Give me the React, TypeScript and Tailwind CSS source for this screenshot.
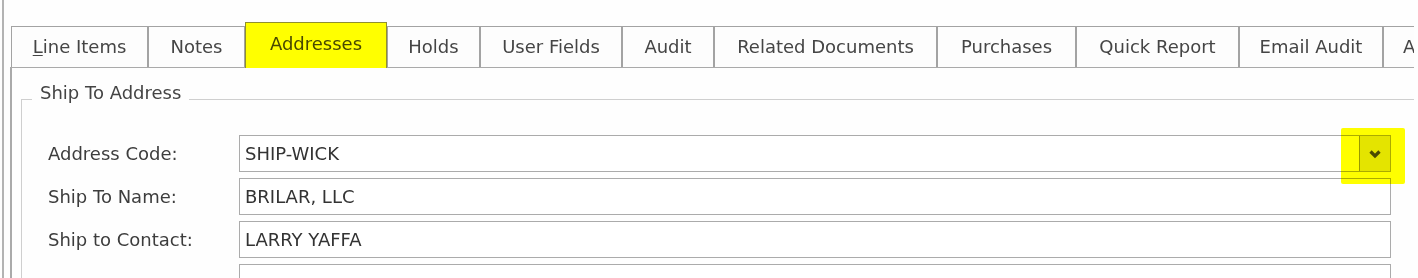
import React from "react";

const tabs = [
  { label: "Line Items", w: "w-[137px]", underline: true },
  { label: "Notes", w: "w-[97px]" },
  { label: "Addresses", w: "w-[142px]", selected: true },
  { label: "Holds", w: "w-[93px]" },
  { label: "User Fields", w: "w-[142px]" },
  { label: "Audit", w: "w-[92px]" },
  { label: "Related Documents", w: "w-[223px]" },
  { label: "Purchases", w: "w-[139px]" },
  { label: "Quick Report", w: "w-[163px]" },
  { label: "Email Audit", w: "w-[144px]" },
  { label: "Attachments", w: "w-[140px]", left: true },
];

const fields = [
  { label: "Address Code:", value: "SHIP-WICK", dropdown: true },
  { label: "Ship To Name:", value: "BRILAR, LLC" },
  { label: "Ship to Contact:", value: "LARRY YAFFA" },
  { label: "", value: "" },
];

function Tab({ t }: { t: (typeof tabs)[number] }) {
  if (t.selected) {
    return (
      <div
        className={`${t.w} relative z-10 -mb-px flex h-[46px] shrink-0 items-center justify-center border border-b-0 border-[#8f8f30] bg-[#ffff00] pb-[3px] text-[#484800]`}
      >
        {t.label}
      </div>
    );
  }
  return (
    <div
      className={`${t.w} flex h-[41px] shrink-0 items-center border border-b-0 border-[#a3a3a3] bg-[#fdfdfd] text-[#454545] ${
        t.left ? "justify-start pl-[19px]" : "justify-center"
      }`}
    >
      {t.underline ? (
        <span>
          <span className="underline underline-offset-2">L</span>
          {t.label.slice(1)}
        </span>
      ) : (
        t.label
      )}
    </div>
  );
}

export default function App() {
  return (
    <div className="flex h-[278px] w-[1418px] overflow-hidden bg-[#fefefe] font-['DejaVu_Sans',sans-serif] text-[18px] leading-[22px]">
      <div className="w-[2px] shrink-0" />
      <div className="w-[2px] shrink-0 bg-[#b3b3b3]" />
      <div className="w-[6px] shrink-0" />

      <div className="flex w-[1404px] shrink-0 flex-col overflow-hidden">
        <div className="h-[22px] shrink-0" />

        {/* tab strip */}
        <div className="flex h-[45px] shrink-0 items-end pl-[1px]">
          {tabs.map((t) => (
            <Tab key={t.label} t={t} />
          ))}
        </div>

        {/* tab page */}
        <div className="flex-1 border-t-[1px] border-l-2 border-[#aaaaaa] pl-[9px]">
          <fieldset className="mt-[14px] w-[1500px] border border-[#cfcfcf] pt-[19px]">
            <legend className="ml-[10px] px-[8px] pb-[12px] text-[#444444]">
              Ship To Address
            </legend>

            <div className="flex flex-col gap-[6px] pl-[26px]">
              {fields.map((f, i) => (
                <div key={i} className="flex items-center">
                  <div className="w-[191px] shrink-0 text-[#3d3d3d]">{f.label}</div>
                  <div className="relative flex h-[37px] w-[1152px] shrink-0 items-center border border-[#ababab] bg-white pl-[5px] text-[#333333]">
                    <span className="flex-1">{f.value}</span>
                    {f.dropdown && (
                      <>
                        <div className="flex h-full w-[31px] items-center justify-center border-l border-[#9a9a9a] bg-[#e4e4e4]">
                          <svg width="14" height="10" viewBox="0 0 14 10">
                            <polyline
                              points="2.5,2.5 7,7 11.5,2.5"
                              fill="none"
                              stroke="#4a4a4a"
                              strokeWidth="3.2"
                            />
                          </svg>
                        </div>
                        <div className="absolute top-[-8px] right-[-15px] z-10 h-[56px] w-[64px] rounded-[2px] bg-[#ffff00] mix-blend-multiply" />
                      </>
                    )}
                  </div>
                </div>
              ))}
            </div>
          </fieldset>
        </div>
      </div>
    </div>
  );
}
